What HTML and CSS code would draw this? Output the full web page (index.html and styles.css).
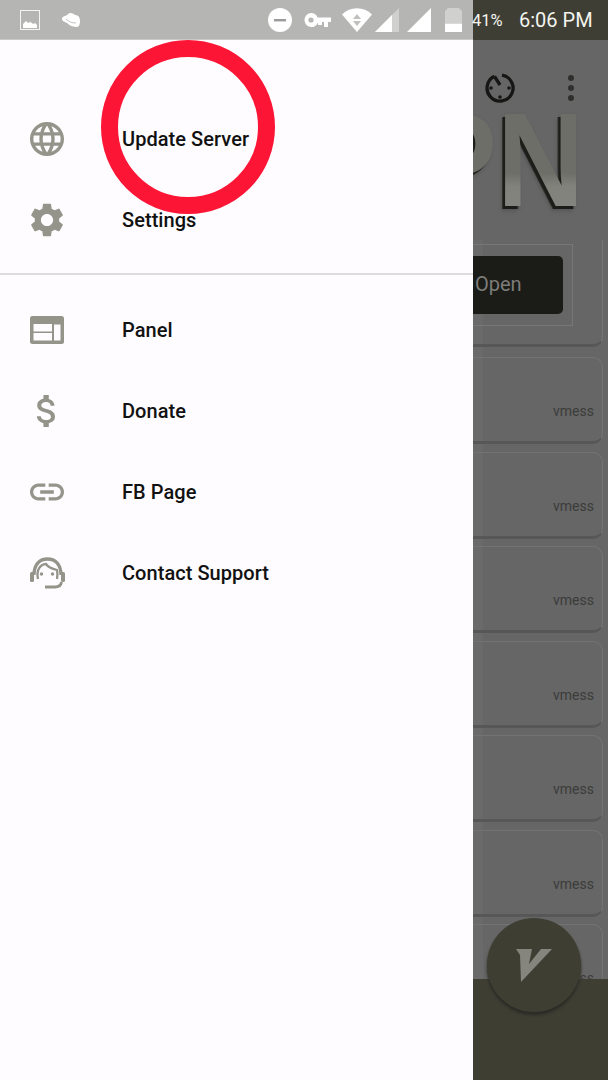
FILE: index.html
```html
<!DOCTYPE html>
<html lang="en">
<head>
<meta charset="utf-8">
<title>Drawer</title>
<link rel="stylesheet" href="styles.css">
</head>
<body>
<div class="screen">
  <header class="statusbar">
    <div class="status-left">
      <svg class="si si-gallery" viewBox="0 0 20 20"><rect x=".5" y=".5" width="19" height="19" fill="none" stroke="#f4f4f4"/><path d="M3 18v-4l3-3 2 2 2-1 2 1 1 1 2-1 2 2v3z" fill="#fff"/></svg>
      <svg class="si si-cloud" viewBox="0 0 18 14"><path d="M8 0c3 0 4 1 5 2 3 0 5 2 5 6 0 3-1 6-3 6-3 0-7-1-10-4C3 9 0 8 0 6c0-3 4-3 5-4 1-1 2-2 3-2z" fill="#fff"/><path d="M4 6c3 3 6 4 10 4" stroke="#c4c4c2" fill="none"/></svg>
      <svg class="si si-dnd" viewBox="0 0 24 24"><circle cx="12" cy="12" r="12" fill="#fff"/><rect x="6" y="11" width="12" height="2.4" fill="#9a9a98"/></svg>
      <svg class="si si-key" viewBox="0 0 27 14"><path d="M7 0a7 7 0 0 1 6.6 4.5H27V9h-3v5h-4V9h-2v3h-4V9.500A7 7 0 1 1 7 0z" fill="#fff"/><circle cx="7" cy="7" r="2.600" fill="#b5b5b3"/></svg>
      <svg class="si si-wifi" viewBox="0 0 30 24"><path d="M0 6.500C8-2 22-2 30 6.500L15 24z" fill="#fff"/><path d="M15 6l4 5h-8zM15 18l4-5h-8z" fill="#c0c0be"/></svg>
      <svg class="si si-sig1" viewBox="0 0 24 24"><path d="M0 24L24 0v24z" fill="#d0d0ce"/><path d="M0 24L17 7v17z" fill="#fff"/></svg>
      <svg class="si si-sig2" viewBox="0 0 24 24"><path d="M0 24L24 0v24z" fill="#fff"/></svg>
      <svg class="si si-batt" viewBox="0 0 17 24"><path d="M3 0h11l3 3v12H0V3z" fill="#d0d0ce"/><rect y="15.500" width="17" height="8.500" fill="#fff"/></svg>
    </div>
    <div class="status-right">
      <span class="pct">41%</span>
      <span class="clock">6:06 PM</span>
    </div>
  </header>

  <div class="content">
    <nav class="drawer">
      <ul class="menu menu-top">
        <li class="item">
          <span class="icon"><svg class="glyph" viewBox="2 2 20 20"><path d="M11.99 2C6.47 2 2 6.48 2 12s4.47 10 9.99 10C17.52 22 22 17.52 22 12S17.52 2 11.99 2zm6.93 6h-2.95c-.32-1.25-.78-2.45-1.38-3.56 1.84.63 3.37 1.91 4.33 3.56zM12 4.040c.83 1.200 1.480 2.530 1.910 3.960h-3.820c.43-1.430 1.080-2.760 1.910-3.960zM4.260 14C4.100 13.360 4 12.690 4 12s.1-1.360.26-2h3.380c-.08.66-.14 1.320-.14 2 0 .68.06 1.340.14 2H4.260zm.82 2h2.950c.32 1.250.78 2.450 1.380 3.560-1.840-.63-3.370-1.900-4.330-3.560zm2.950-8H5.080c.96-1.660 2.490-2.930 4.330-3.560C8.810 5.550 8.350 6.750 8.030 8zM12 19.960c-.83-1.200-1.480-2.530-1.910-3.960h3.820c-.43 1.430-1.080 2.760-1.910 3.960zM14.340 14H9.660c-.09-.66-.16-1.320-.16-2 0-.68.07-1.350.16-2h4.680c.09.65.16 1.320.16 2 0 .68-.07 1.340-.16 2zm.25 5.560c.6-1.110 1.060-2.310 1.380-3.560h2.950c-.96 1.650-2.490 2.930-4.330 3.560zM16.360 14c.08-.66.14-1.320.14-2 0-.68-.06-1.340-.14-2h3.380c.16.64.26 1.310.26 2s-.1 1.360-.26 2h-3.380z"/></svg></span>
          <span class="label">Update Server</span>
        </li>
        <li class="item">
          <span class="icon"><svg class="glyph" viewBox="2.500 2 19 20"><path d="M19.140 12.940c.04-.3.06-.61.06-.94 0-.32-.02-.64-.07-.94l2.030-1.580c.18-.14.23-.41.12-.61l-1.920-3.320c-.12-.22-.37-.29-.59-.22l-2.390.96c-.5-.38-1.030-.7-1.620-.94l-.36-2.540c-.04-.24-.24-.41-.48-.41h-3.840c-.24 0-.43.17-.47.41l-.36 2.540c-.59.24-1.130.57-1.620.94l-2.390-.96c-.22-.08-.47 0-.59.22L2.740 8.870c-.12.21-.08.47.12.61l2.030 1.580c-.05.3-.09.63-.09.94s.02.64.07.94l-2.030 1.580c-.18.14-.23.41-.12.61l1.920 3.320c.12.22.37.29.59.22l2.390-.96c.5.38 1.030.7 1.620.94l.36 2.54c.05.24.24.41.48.41h3.840c.24 0 .44-.17.47-.41l.36-2.540c.59-.24 1.130-.56 1.620-.94l2.390.96c.22.08.47 0 .59-.22l1.920-3.320c.12-.22.07-.47-.12-.61l-2.010-1.580zM12 15.600c-1.980 0-3.600-1.620-3.600-3.600s1.620-3.600 3.600-3.600 3.600 1.620 3.600 3.600-1.620 3.600-3.600 3.600z"/></svg></span>
          <span class="label">Settings</span>
        </li>
      </ul>
      <hr class="divider">
      <ul class="menu">
        <li class="item">
          <span class="icon"><svg class="glyph-panel" viewBox="0 0 34 28"><path fill-rule="evenodd" d="M2.500 0h29A2.500 2.500 0 0 1 34 2.500v23a2.500 2.500 0 0 1-2.500 2.500h-29A2.500 2.500 0 0 1 0 25.500v-23A2.500 2.500 0 0 1 2.500 0zM3.500 8v7.500H22V8zm0 9v7.500H22V17zM24 8.500v16h6.500v-16z"/></svg></span>
          <span class="label">Panel</span>
        </li>
        <li class="item">
          <span class="icon"><svg class="glyph-dollar" viewBox="3 3 18 18"><path d="M11.800 10.900c-2.270-.59-3-1.200-3-2.150 0-1.090 1.010-1.850 2.700-1.850 1.780 0 2.440.85 2.500 2.100h2.210c-.07-1.720-1.120-3.300-3.210-3.810V3h-3v2.160c-1.940.42-3.500 1.680-3.500 3.610 0 2.310 1.910 3.460 4.700 4.130 2.500.6 3 1.480 3 2.410 0 .69-.49 1.790-2.700 1.790-2.060 0-2.870-.92-2.980-2.100h-2.200c.12 2.190 1.760 3.420 3.680 3.830V21h3v-2.150c1.950-.37 3.500-1.500 3.500-3.550 0-2.840-2.430-3.810-4.700-4.400z"/></svg></span>
          <span class="label">Donate</span>
        </li>
        <li class="item">
          <span class="icon"><svg class="glyph" viewBox="2 2 20 20"><path d="M3.900 12c0-1.710 1.390-3.100 3.100-3.100h4V7H7c-2.760 0-5 2.240-5 5s2.240 5 5 5h4v-1.900H7c-1.710 0-3.100-1.390-3.100-3.100zM8 13h8v-2H8v2zm9-6h-4v1.900h4c1.710 0 3.100 1.390 3.100 3.100s-1.390 3.100-3.100 3.100h-4V17h4c2.760 0 5-2.240 5-5s-2.240-5-5-5z"/></svg></span>
          <span class="label">FB Page</span>
        </li>
        <li class="item">
          <span class="icon"><svg class="glyph-head" viewBox="0 0 35 32"><g class="head-lines"><path class="head-outer" d="M4 18C4 7 10 2 17.500 2S31 7 31 18"/><path class="head-hair" d="M8 22C6 13 10 7.500 16 7c2 3 7 5 11 6 .7 3 .6 6 0 9"/><path class="head-mic" d="M15 30h10c3 0 6-1 6.500-5"/></g><rect x="0" y="15" width="4" height="10" rx="1.500"/><rect x="31" y="15" width="4" height="10" rx="1.500"/><circle cx="11.500" cy="17" r="1.700"/><circle cx="22.500" cy="17" r="1.700"/></svg></span>
          <span class="label">Contact Support</span>
        </li>
      </ul>
      <div class="ring"></div>
    </nav>

    <main class="peek">
      <div class="toolbar">
        <svg class="timer" viewBox="0 0 30 30"><g class="timer-lines"><path d="M9.500 3.300A13 13 0 1 0 17 2.200"/><path d="M9.500 3.300L15 12"/></g><circle cx="6" cy="15" r="1.800"/><circle cx="15" cy="24" r="1.800"/><circle cx="24" cy="15" r="1.800"/></svg>
        <div class="dots"><i></i><i></i><i></i></div>
      </div>
      <div class="logo"><span class="logo-text">PN</span></div>
      <section class="hero-card">
        <div class="open-box"><div class="open-btn">Open</div></div>
      </section>
      <ul class="servers">
        <li class="server"><span>vmess</span></li>
        <li class="server"><span>vmess</span></li>
        <li class="server"><span>vmess</span></li>
        <li class="server"><span>vmess</span></li>
        <li class="server"><span>vmess</span></li>
        <li class="server"><span>vmess</span></li>
        <li class="server"><span>vmess</span></li>
      </ul>
      <footer class="bottom"></footer>
      <div class="fab"><svg class="fab-logo" viewBox="0 0 36 34"><path d="M0 1h16l-3 15L25 1h11L5 34 4 7z"/></svg></div>
    </main>
  </div>
</div>
</body>
</html>
```
FILE: styles.css
```css
* { box-sizing: border-box; }
html, body { margin: 0; padding: 0; }
body { width: 608px; height: 1080px; overflow: hidden; font-family: Roboto, "Liberation Sans", sans-serif; background: #666; }
ul { list-style: none; margin: 0; padding: 0; }

.screen { width: 608px; height: 1080px; display: flex; flex-direction: column; }

/* status bar */
.statusbar { height: 40px; flex: none; display: flex; }
.status-left { width: 473px; background: #b5b5b3; border-bottom: 1px solid #c9c9c7; display: flex; align-items: center; padding-left: 20px; }
.status-right { flex: 1; background: #3e3e35; color: #f4f4ef; display: flex; align-items: center; white-space: nowrap; }
.pct { font-size: 16.500px; margin-left: -1px; width: 47px; }
.clock { font-size: 20px; }
.si { display: block; flex: none; }
.si-gallery { width: 20px; height: 20px; }
.si-cloud { width: 18px; height: 14px; margin-left: 22px; }
.si-dnd { width: 24px; height: 24px; margin-left: 188px; }
.si-key { width: 27px; height: 14px; margin-left: 12px; }
.si-wifi { width: 30px; height: 24px; margin-left: 11px; }
.si-sig1 { width: 24px; height: 24px; margin-left: 3px; }
.si-sig2 { width: 24px; height: 24px; margin-left: 8px; }
.si-batt { width: 17px; height: 24px; margin-left: 14px; }

.content { flex: 1; min-height: 0; display: flex; }

/* drawer */
.drawer { width: 473px; flex: none; background: #fefcfe; padding-top: 58.500px; position: relative; }
.item { height: 81px; display: flex; align-items: center; padding-left: 30px; }
.icon { width: 34px; height: 34px; flex: none; margin-right: 58px; display: flex; align-items: center; justify-content: center; fill: #94948a; }
.glyph { width: 34px; height: 34px; display: block; }
.glyph-panel { width: 34px; height: 28px; display: block; }
.glyph-dollar { width: 32px; height: 32px; display: block; }
.glyph-head { width: 35px; height: 32px; display: block; flex: none; }
.head-lines { fill: none; stroke: #94948a; }
.head-outer { stroke-width: 3.400; }
.head-hair { stroke-width: 2.300; }
.head-mic { stroke-width: 2.800; }
.label { font-size: 20px; font-weight: 500; color: #111; white-space: nowrap; letter-spacing: .05px; }
.divider { margin: 12.500px 0 14px; border: 0; height: 2px; background: #dcdcdc; }
.ring { position: absolute; left: 101px; top: 0; width: 174px; height: 174px; border: 17px solid #fd1535; border-radius: 50%; pointer-events: none; }

/* dimmed page behind */
.peek { flex: 1; min-width: 0; position: relative; overflow: hidden; display: flex; flex-direction: column; background: #666; }
.toolbar { height: 68px; flex: none; display: flex; align-items: center; padding: 28px 0 0 12px; }
.timer { width: 30px; height: 30px; display: block; flex: none; fill: #161614; }
.timer-lines { fill: none; stroke: #161614; stroke-width: 3.300; }
.dots { margin-left: 53px; display: flex; flex-direction: column; gap: 4px; }
.dots i { display: block; width: 6px; height: 6px; border-radius: 50%; background: #2f2f2d; }

.logo { height: 132px; flex: none; display: flex; justify-content: flex-end; overflow: hidden; padding-right: 24px; }
.logo-text { font-family: "Liberation Sans", sans-serif; font-weight: 700; font-size: 134px; line-height: 103px; height: 130px; background: linear-gradient(180deg, #6e6e69 0, #6e6e69 50%, #82827d 60%, #85857f 86%); -webkit-background-clip: text; background-clip: text; color: transparent; filter: drop-shadow(-3px 3px 0 #1c1c19) drop-shadow(-1px 2px 2px #555); transform: scaleX(.9); transform-origin: right center; white-space: nowrap; }

.hero-card { height: 107px; flex: none; margin-right: 5px; border-bottom: 3px solid #575757; border-right: 1px solid #757575; border-radius: 0 0 10px 0; padding-top: 4px; background: linear-gradient(90deg, #6a6a6a 10px, transparent 10px); }
.open-box { width: 100px; height: 82px; border: 1px solid #777; border-left: 0; padding: 11px 9px 0 0; }
.open-btn { height: 58px; background: #1b1b18; border-radius: 0 5px 5px 0; color: #7d7d78; font-size: 20px; line-height: 56px; padding-left: 2px; }

.servers { flex: 1; min-height: 0; overflow: hidden; padding: 10px 5px 0 0; display: flex; flex-direction: column; gap: 7.500px; background: linear-gradient(90deg, #6a6a6a 10px, transparent 10px); }
.server { height: 87px; flex: none; border: 1px solid #737373; border-left: 0; border-bottom: 3px solid #575757; border-radius: 0 10px 10px 0; display: flex; align-items: flex-end; justify-content: flex-end; padding: 0 8px 22px 0; color: #3c3c3a; font-size: 14px; }
.bottom { height: 101px; flex: none; background: #3e3e33; }
.fab { position: absolute; left: 14px; top: 878px; width: 94px; height: 94px; border-radius: 50%; background: #3e3e33; box-shadow: 0 3px 3px #2b2b26; display: flex; align-items: center; justify-content: center; }
.fab-logo { width: 36px; height: 34px; display: block; fill: #85857e; }
```
